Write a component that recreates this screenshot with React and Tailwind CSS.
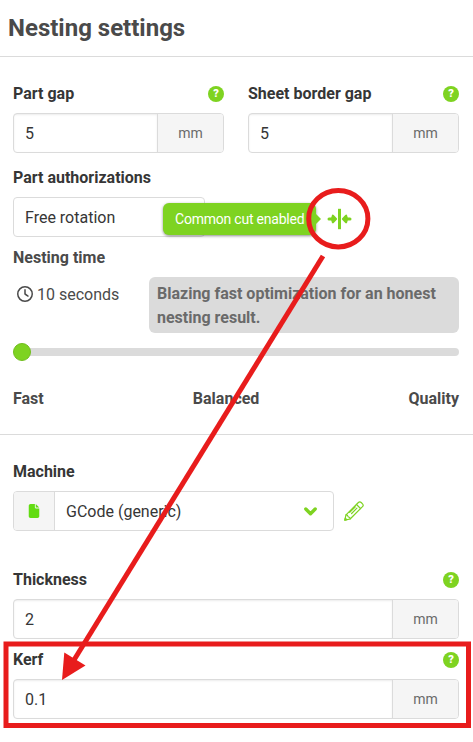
import React, { useState } from "react"
import { FaFile, FaRegClock } from "react-icons/fa6"

const levels = ["Fast", "Balanced", "Quality"]

function HelpIcon() {
  return (
    <span className="flex h-4 w-4 items-center justify-center rounded-full bg-[#7ed321] text-[11px] leading-4 font-black text-white">
      ?
    </span>
  )
}

function CommonCutIcon() {
  return (
    <svg width="26" height="24" viewBox="0 0 26 24" fill="none" stroke="#7ed321" strokeLinecap="round" strokeLinejoin="round">
      <path d="M12.5 1.8v20.4" strokeWidth="3" strokeLinecap="butt" />
      <path d="M2 12h5M23 12h-5" strokeWidth="3" />
      <path d="M5.9 8.7 9 12l-3.1 3.3L5 12ZM19.1 8.7 16 12l3.1 3.3.9-3.3Z" fill="#7ed321" strokeWidth="2.2" />
    </svg>
  )
}

function PencilIcon() {
  return (
    <svg width="20" height="20" viewBox="0 0 20 20" fill="none" stroke="#7ed321" strokeWidth="1.2" strokeLinejoin="round" strokeLinecap="round">
      <path d="M.8 19.2 2 13.9 14.4 1.5q1.4-1.4 2.8 0l1.3 1.3q1.4 1.4 0 2.8L6.1 18Z" />
      <path d="M2 13.9q1.7-.2 1.9 1.4.1.9 1 .9 1.2.2 1.2 1.8M12.5 3.5l4 4M12.9 7.2 7.6 12.5M11.3 5.8l-5.6 5.6" />
      <path d="m.8 19.2.5-2 1.5 1.5Z" fill="#7ed321" />
    </svg>
  )
}

function NumberField({ label, initial }) {
  const [value, setValue] = useState(initial)

  return (
    <div>
      <div className="mb-2 flex h-6 items-center justify-between pt-0.5">
        <label className="font-bold text-[#363636]">{label}</label>
        <HelpIcon />
      </div>
      <div className="flex h-10 overflow-hidden rounded border border-[#dbdbdb]">
        <input
          value={value}
          onChange={(e) => setValue(e.target.value)}
          className="min-w-0 flex-1 px-[11px] pt-0.5 text-[#363636] shadow-[inset_0_1px_2px_rgba(10,10,10,0.08)] outline-none"
        />
        <span className="flex w-[66px] items-center justify-center border-l border-[#dbdbdb] bg-[#f5f5f5] text-sm text-[#6a6a6a]">
          mm
        </span>
      </div>
    </div>
  )
}

// Red marks that link the common cut toggle to the kerf field
function Annotations() {
  return (
    <svg className="pointer-events-none absolute inset-0" width="473" height="742" viewBox="0 0 473 742" fill="none" stroke="#e81c1c" strokeWidth="5">
      <ellipse cx="338.3" cy="218.7" rx="29.6" ry="28.2" />
      <path d="M323 256 74 660" />
      <path d="m62 680 2.3-27.5 21.2 13Z" fill="#e81c1c" stroke="none" />
      <rect x="6" y="644" width="462.5" height="81.5" />
    </svg>
  )
}

export default function NestingSettings() {
  return (
    <div className="relative h-[742px] w-[473px] overflow-hidden bg-white font-[Roboto,sans-serif] text-base leading-6 text-[#4a4a4a]">
      <h1 className="flex h-[57px] items-center border-b border-[#dbdbdb] pl-2 text-2xl font-bold">Nesting settings</h1>

      <section className="h-[378px] border-b border-[#dbdbdb] pt-6 pr-3.5 pl-[13px]">
        <div className="grid grid-cols-2 gap-6">
          <NumberField label="Part gap" initial="5" />
          <NumberField label="Sheet border gap" initial="5" />
        </div>

        <label className="mt-[13px] mb-[7px] block font-bold text-[#363636]">Part authorizations</label>
        <div className="relative flex h-10 items-center">
          <div className="flex h-10 w-48 items-center rounded border border-[#dbdbdb] px-[11px] pt-0.5 text-[#363636]">
            Free rotation
          </div>
          <div className="mt-1 ml-[122px]">
            <CommonCutIcon />
          </div>
          <div className="absolute top-1.5 left-[150px] flex h-8 w-[153px] items-center rounded-md bg-[#7ed321] pl-3 text-sm tracking-[-0.22px] whitespace-nowrap text-white shadow-[0_1px_3px_rgba(0,0,0,0.45)]">
            Common cut enabled
            <span className="absolute top-[11px] -right-[5px] border-y-[5px] border-l-[5px] border-y-transparent border-l-[#7ed321]" />
          </div>
        </div>

        <div className="mt-[9px] mb-[7px] font-bold">Nesting time</div>
        <div className="flex items-start justify-between">
          <div className="mt-[5px] ml-1 flex h-6 items-center gap-1">
            <FaRegClock className="h-4 w-4" />
            <span className="pt-0.5">10 seconds</span>
          </div>
          <p className="w-[310px] rounded-md bg-[#dbdbdb] px-2 pt-[5px] pb-[3px] font-bold text-[#6a6a6a]">
            Blazing fast optimization for an honest nesting result.
          </p>
        </div>

        <div className="mt-2.5 flex h-[18px] items-center">
          <div className="z-10 h-[18px] w-[18px] rounded-full border border-[#71be1e] bg-[#7ed321]" />
          <div className="-ml-1 h-2 flex-1 rounded-r-full bg-[#dbdbdb]" />
        </div>
        <div className="mt-[26px] flex justify-between font-bold">
          {levels.map((level) => (
            <span key={level}>{level}</span>
          ))}
        </div>
      </section>

      <section className="pt-[25px] pr-3.5 pl-[13px]">
        <label className="mb-[7px] block font-bold text-[#363636]">Machine</label>
        <div className="flex items-center">
          <div className="flex h-10 w-[321px] overflow-hidden rounded border border-[#dbdbdb]">
            <span className="flex w-[41px] items-center justify-center border-r border-[#dbdbdb] bg-[#f5f5f5]">
              <FaFile className="h-3.5 w-3.5 text-[#62dc12]" />
            </span>
            <span className="flex flex-1 items-center justify-between pr-4 pl-[11px] text-[#363636]">
              <span className="pt-0.5">GCode (generic)</span>
              <svg width="13" height="9" viewBox="0 0 13 9" fill="none" stroke="#7ed321" strokeWidth="3.4" strokeLinecap="round" strokeLinejoin="round">
                <path d="M1.8 2 6.5 6.7 11.2 2" />
              </svg>
            </span>
          </div>
          <div className="ml-2.5">
            <PencilIcon />
          </div>
        </div>

        <div className="mt-9 space-y-2">
          <NumberField label="Thickness" initial="2" />
          <NumberField label="Kerf" initial="0.1" />
        </div>
      </section>

      <Annotations />
    </div>
  )
}
